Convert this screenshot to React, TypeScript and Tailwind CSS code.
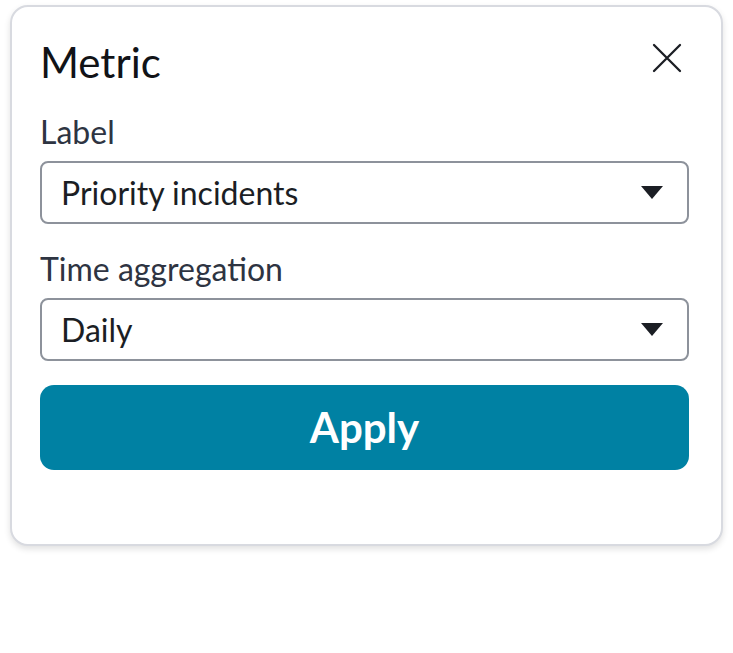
function Field({ label, value }: { label: string; value: string }) {
	return (
		<div className="flex flex-col">
			<div className="text-[32px] leading-[34px] text-[#2e3442]">{label}</div>
			<div className="mt-[12px] h-[63px] rounded-[8px] border-2 border-[#8d929b] flex items-center justify-between pl-[19px] pr-[24px]">
				<span className="text-[32px] leading-[40px] text-[#1b1e24]">{value}</span>
				<svg width="22" height="14" viewBox="0 0 22 14" className="mt-[1px]">
					<path d="M0 0 L22 0 L11 13 Z" fill="#1b1e24" />
				</svg>
			</div>
		</div>
	);
}

export default function App() {
	return (
		<div className="w-[733px] h-[653px] bg-white pt-[5px] pl-[10px]" style={{ fontFamily: 'Lato, "Noto Sans", sans-serif' }}>
			<div className="w-[713px] h-[541px] rounded-[18px] border-2 border-[#d8dae0] bg-white shadow-[0_3px_6px_rgba(0,0,0,0.12)] pl-[28px] pr-[32px] pt-[31px]">
				<div className="flex items-start justify-between">
					<h1 className="text-[42px] leading-[48px] text-[#111317]">Metric</h1>
					<button className="mt-[5px] mr-[7px] text-[#1b1e24]">
						<svg width="30" height="30" viewBox="0 0 30 30" fill="none" stroke="currentColor" strokeWidth="2.3" strokeLinecap="round">
							<path d="M2 2 L28 28 M28 2 L2 28" />
						</svg>
					</button>
				</div>
				<div className="mt-[29px] flex flex-col gap-[28px]">
					<Field label="Label" value="Priority incidents" />
					<Field label="Time aggregation" value="Daily" />
				</div>
				<button className="mt-[24px] w-full h-[85px] rounded-[14px] bg-[#0081a3] text-white text-[42px] font-bold">
					Apply
				</button>
			</div>
		</div>
	);
}
